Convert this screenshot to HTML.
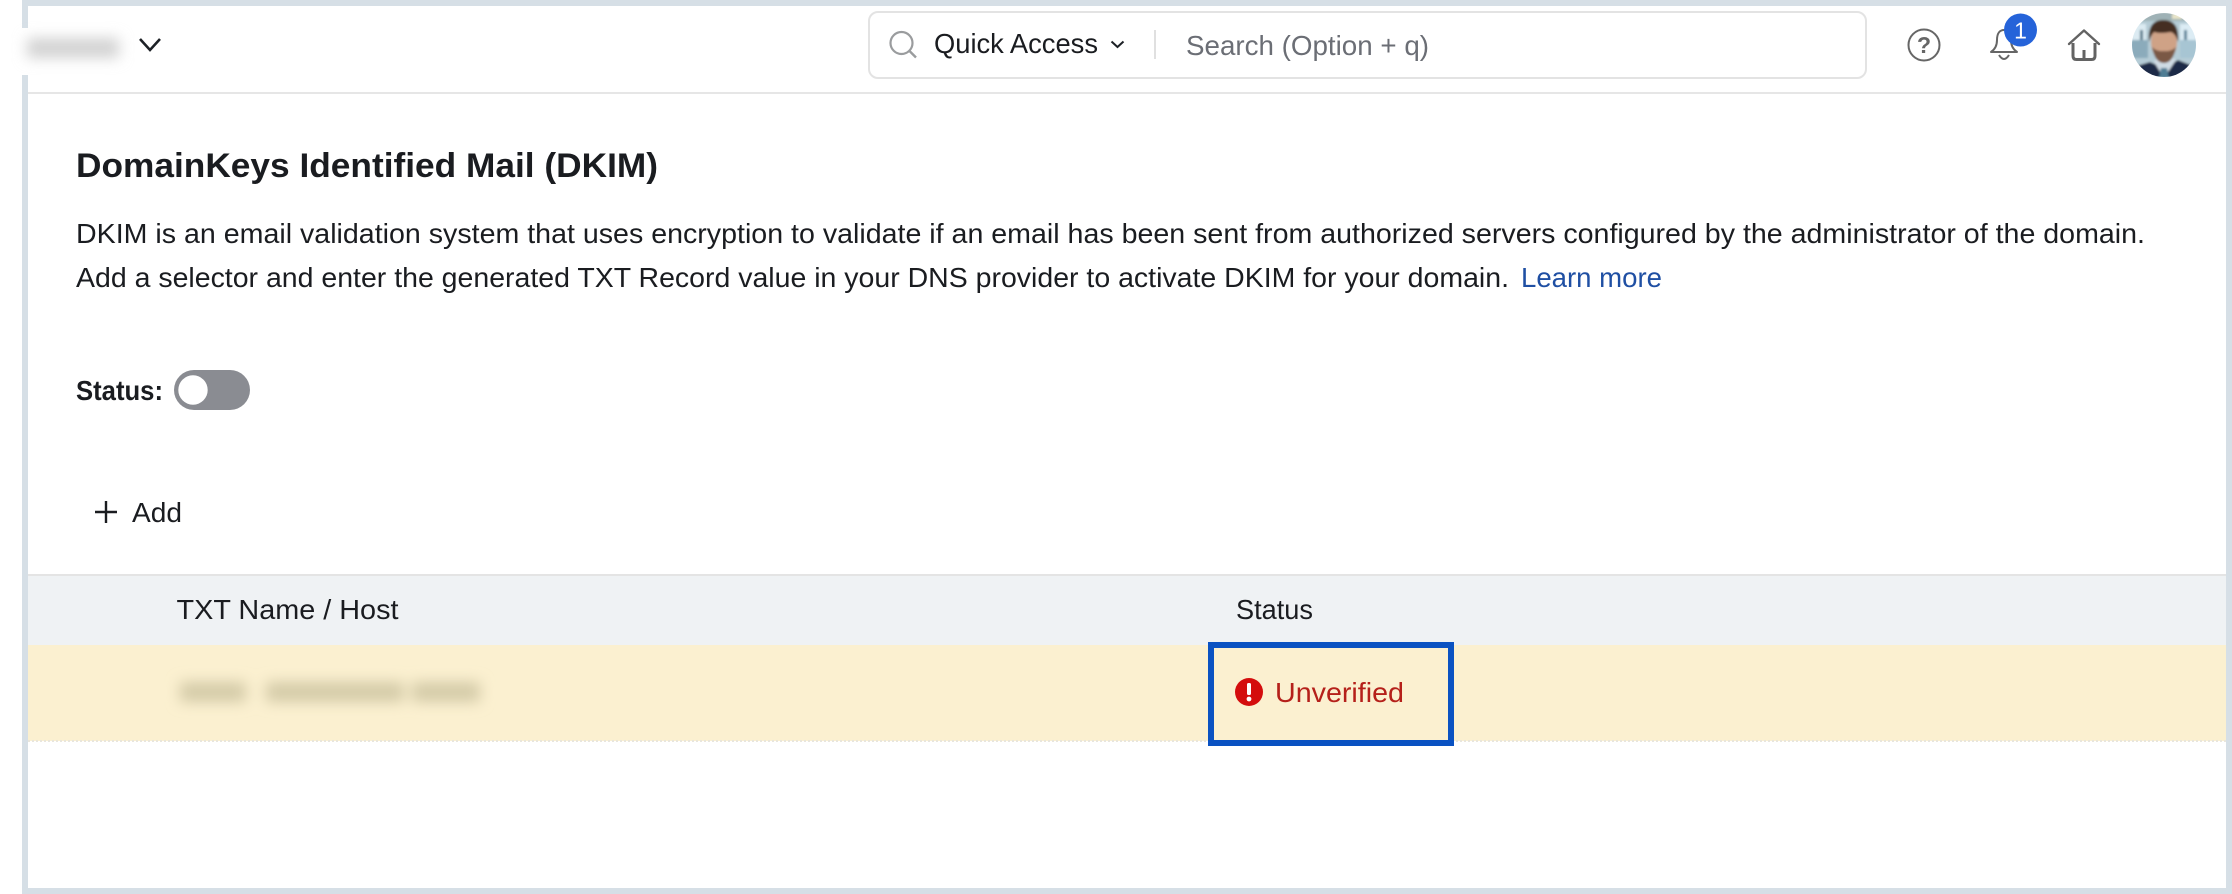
<!DOCTYPE html>
<html lang="en"><head><meta charset="utf-8"><title>DKIM</title>
<style>
html,body{margin:0;padding:0;background:#fff;width:2232px;height:894px;overflow:hidden}
svg{display:block}
text{font-family:"Liberation Sans",Arial,sans-serif;fill:#1a1c20}
</style></head><body>
<svg xmlns="http://www.w3.org/2000/svg" width="2232" height="894" viewBox="0 0 2232 894">
<defs>
<filter id="b1" x="-30%" y="-150%" width="160%" height="400%"><feGaussianBlur stdDeviation="7"/></filter>
<filter id="b2" x="-30%" y="-150%" width="160%" height="400%"><feGaussianBlur stdDeviation="7"/></filter>
<filter id="bs" x="-30%" y="-30%" width="160%" height="160%"><feGaussianBlur stdDeviation="1"/></filter>
<clipPath id="av"><circle cx="2164" cy="45" r="32"/></clipPath>
</defs>
<rect width="2232" height="894" fill="#fff"/>
<rect x="22" y="0" width="2210" height="894" fill="#d6dfe6"/>
<rect x="28" y="6" width="2198" height="882" fill="#fff"/>
<!-- header -->
<rect x="28" y="92" width="2198" height="2" fill="#e6e6e6"/>
<rect x="17" y="28" width="111" height="47" fill="#fff"/>
<g filter="url(#b1)"><rect x="27" y="38" width="92" height="20" fill="#d2d2d2"/></g>
<path d="M140 39L150 50L160 39" fill="none" stroke="#1d2126" stroke-width="2.6"/>
<rect x="869" y="12" width="997" height="66" rx="9" fill="#fff" stroke="#e3e3e3" stroke-width="2"/>
<circle cx="901.5" cy="43" r="11" fill="none" stroke="#9a9c9e" stroke-width="2.2"/>
<path d="M909.5 51L916 57.5" stroke="#9a9c9e" stroke-width="2.4" fill="none"/>
<text x="934" y="53" font-size="28" textLength="164" lengthAdjust="spacingAndGlyphs">Quick Access</text>
<path d="M1111.5 41.5L1117.5 47L1123.5 41.5" fill="none" stroke="#1d2126" stroke-width="2"/>
<rect x="1154" y="30" width="2" height="29" fill="#e0e0e0"/>
<text x="1186" y="55" font-size="28" textLength="243" lengthAdjust="spacingAndGlyphs" style="fill:#6b6e75">Search (Option + q)</text>
<circle cx="1924" cy="45" r="15.5" fill="none" stroke="#666" stroke-width="2"/>
<text x="1924" y="53" font-size="23" font-weight="700" text-anchor="middle" style="fill:#666">?</text>
<path d="M1991 52Q1997 48 1997 40C1997 33 2000 30 2004 30C2009 30 2011 35 2011 40Q2011 48 2017 52Z" fill="none" stroke="#666" stroke-width="2" stroke-linejoin="round"/>
<path d="M1999 55Q2004 63 2009 55" fill="none" stroke="#666" stroke-width="2"/>
<circle cx="2020.5" cy="30" r="16.5" fill="#2563d9"/>
<text x="2020.5" y="38.500" font-size="23" text-anchor="middle" style="fill:#fff">1</text>
<path d="M2069 44L2084 30.500L2099 44" fill="none" stroke="#636363" stroke-width="2.4" stroke-linecap="round" stroke-linejoin="round"/>
<path d="M2073 43V56Q2073 59.500 2076.500 59.500H2091.500Q2095 59.500 2095 56V43" fill="none" stroke="#636363" stroke-width="3"/>
<path d="M2084 60V50" fill="none" stroke="#636363" stroke-width="3"/>
<g clip-path="url(#av)">
<g filter="url(#bs)">
<rect x="2130" y="12" width="68" height="66" fill="#b5ccd6"/>
<rect x="2130" y="12" width="68" height="9" fill="#9fb2b6"/>
<rect x="2172" y="14" width="10" height="5" fill="#e8e4c8"/>
<rect x="2132" y="24" width="14" height="16" fill="#dcebf2"/>
<rect x="2180" y="24" width="16" height="16" fill="#dcecf4"/>
<rect x="2140" y="30" width="3" height="28" fill="#5a7b8c"/>
<rect x="2184" y="30" width="3" height="28" fill="#5a8299"/>
<rect x="2130" y="40" width="18" height="18" fill="#8babbb"/>
<rect x="2180" y="40" width="18" height="18" fill="#a7c5d3"/>
<path d="M2130 78V68L2150 62L2164 68L2178 60L2198 68V78Z" fill="#1d2c47"/>
<path d="M2154 62L2164 78L2176 60L2170 56H2158Z" fill="#cfdbe4"/>
<path d="M2161 68L2167 68L2169 78H2159Z" fill="#4f7d94"/>
<ellipse cx="2164" cy="42" rx="13" ry="19" fill="#cfa286"/>
<path d="M2152 47Q2155 63 2164 63Q2173 63 2176 47Q2171 52 2164 51Q2157 52 2152 47Z" fill="#7a5844"/>
<path d="M2149 42Q2147 21 2162 20Q2180 19 2178 42Q2176 34 2171 32Q2160 34 2154 32Q2151 35 2149 42Z" fill="#452e22"/>
</g>
</g>
<!-- content -->
<text x="76" y="177" font-size="34" font-weight="700" textLength="582" lengthAdjust="spacingAndGlyphs">DomainKeys Identified Mail (DKIM)</text>
<text x="76" y="243" font-size="28" textLength="2069" lengthAdjust="spacingAndGlyphs">DKIM is an email validation system that uses encryption to validate if an email has been sent from authorized servers configured by the administrator of the domain.</text>
<text x="76" y="287" font-size="28" textLength="1433" lengthAdjust="spacingAndGlyphs">Add a selector and enter the generated TXT Record value in your DNS provider to activate DKIM for your domain.</text>
<text x="1521" y="287" font-size="28" textLength="141" lengthAdjust="spacingAndGlyphs" style="fill:#1f4fa3">Learn more</text>
<text x="76" y="400" font-size="28" font-weight="700" textLength="87" lengthAdjust="spacingAndGlyphs">Status:</text>
<rect x="174" y="370" width="76" height="40" rx="20" fill="#8a8c92"/>
<circle cx="193" cy="390" r="14.7" fill="#fff"/>
<path d="M106 501V523M95 512H117" stroke="#1a1c20" stroke-width="2.400" fill="none"/>
<text x="132" y="522" font-size="28" textLength="50" lengthAdjust="spacingAndGlyphs">Add</text>
<!-- table -->
<rect x="28" y="575" width="2198" height="70" fill="#eff2f4"/>
<rect x="28" y="574" width="2198" height="2" fill="#e4e4e4"/>
<text x="176.500" y="619" font-size="28" textLength="222" lengthAdjust="spacingAndGlyphs">TXT Name / Host</text>
<text x="1236" y="619" font-size="28" textLength="77" lengthAdjust="spacingAndGlyphs">Status</text>
<rect x="28" y="645" width="2198" height="96" fill="#fbf0d0"/>
<line x1="28" y1="741" x2="2226" y2="741" stroke="#e9e6dc" stroke-width="2" stroke-dasharray="2 2"/>
<g filter="url(#b2)" fill="#d4cba8"><rect x="180" y="682" width="66" height="20"/><rect x="266" y="682" width="138" height="20"/><rect x="412" y="682" width="68" height="20"/></g>
<rect x="1211" y="645" width="240" height="98" fill="#fbf0d0" stroke="#0a52c2" stroke-width="6"/>
<circle cx="1249" cy="692" r="14" fill="#d40d0d"/>
<rect x="1247" y="683" width="4" height="12" rx="1.500" fill="#fff"/>
<circle cx="1249" cy="699" r="2.400" fill="#fff"/>
<text x="1275" y="702" font-size="28" textLength="129" lengthAdjust="spacingAndGlyphs" style="fill:#b5201a">Unverified</text>
</svg>
</body></html>
